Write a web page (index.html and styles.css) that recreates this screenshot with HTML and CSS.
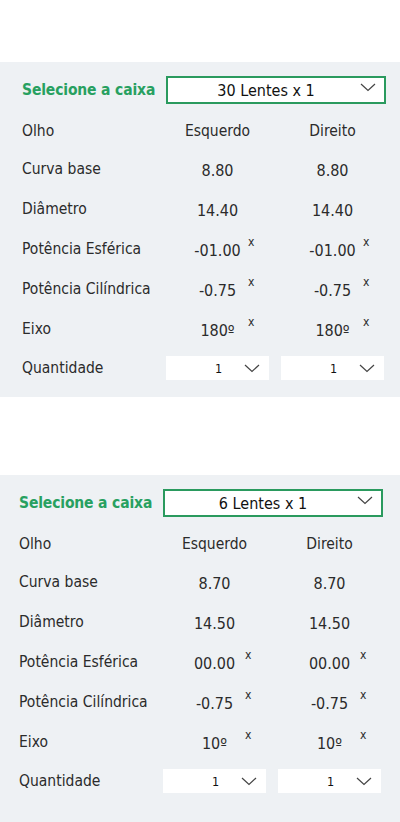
FILE: index.html
```html
<!DOCTYPE html>
<html lang="pt">
<head>
<meta charset="utf-8">
<title>Lentes</title>
<link rel="stylesheet" href="styles.css">
</head>
<body>
<main class="page">
  <section class="panel">
    <div class="panel-inner">
      <div class="box-row">
        <span class="box-label">Selecione a caixa</span>
        <div class="box-select">
          <span class="box-value">30 Lentes x 1</span>
          <svg class="chev chev--box" width="16" height="9" viewBox="0 0 16 9"><polyline points="1,1 8,7.5 15,1" fill="none" stroke="#444" stroke-width="1.2"/></svg>
        </div>
      </div>
      <div class="spec">
        <div class="row row--head"><span class="label">Olho</span><span class="cell head">Esquerdo</span><span class="cell head">Direito</span></div>
        <div class="row"><span class="label">Curva base</span><span class="cell">8.80</span><span class="cell">8.80</span></div>
        <div class="row"><span class="label">Diâmetro</span><span class="cell">14.40</span><span class="cell">14.40</span></div>
        <div class="row"><span class="label">Potência Esférica</span><span class="cell">-01.00<sup class="mark">x</sup></span><span class="cell">-01.00<sup class="mark">x</sup></span></div>
        <div class="row"><span class="label">Potência Cilíndrica</span><span class="cell">-0.75<sup class="mark">x</sup></span><span class="cell">-0.75<sup class="mark">x</sup></span></div>
        <div class="row"><span class="label">Eixo</span><span class="cell">180º<sup class="mark">x</sup></span><span class="cell">180º<sup class="mark">x</sup></span></div>
        <div class="row row--qty"><span class="label">Quantidade</span>
          <div class="qty"><span class="qty-value">1</span><svg class="chev chev--qty" width="16" height="9" viewBox="0 0 16 9"><polyline points="1,1 8,7.5 15,1" fill="none" stroke="#444" stroke-width="1.2"/></svg></div>
          <div class="qty"><span class="qty-value">1</span><svg class="chev chev--qty" width="16" height="9" viewBox="0 0 16 9"><polyline points="1,1 8,7.5 15,1" fill="none" stroke="#444" stroke-width="1.2"/></svg></div>
        </div>
      </div>
    </div>
  </section>

  <section class="panel panel--second">
    <div class="panel-inner">
      <div class="box-row">
        <span class="box-label">Selecione a caixa</span>
        <div class="box-select">
          <span class="box-value">6 Lentes x 1</span>
          <svg class="chev chev--box" width="16" height="9" viewBox="0 0 16 9"><polyline points="1,1 8,7.5 15,1" fill="none" stroke="#444" stroke-width="1.2"/></svg>
        </div>
      </div>
      <div class="spec">
        <div class="row row--head"><span class="label">Olho</span><span class="cell head">Esquerdo</span><span class="cell head">Direito</span></div>
        <div class="row"><span class="label">Curva base</span><span class="cell">8.70</span><span class="cell">8.70</span></div>
        <div class="row"><span class="label">Diâmetro</span><span class="cell">14.50</span><span class="cell">14.50</span></div>
        <div class="row"><span class="label">Potência Esférica</span><span class="cell">00.00<sup class="mark">x</sup></span><span class="cell">00.00<sup class="mark">x</sup></span></div>
        <div class="row"><span class="label">Potência Cilíndrica</span><span class="cell">-0.75<sup class="mark">x</sup></span><span class="cell">-0.75<sup class="mark">x</sup></span></div>
        <div class="row"><span class="label">Eixo</span><span class="cell">10º<sup class="mark">x</sup></span><span class="cell">10º<sup class="mark">x</sup></span></div>
        <div class="row row--qty"><span class="label">Quantidade</span>
          <div class="qty"><span class="qty-value">1</span><svg class="chev chev--qty" width="16" height="9" viewBox="0 0 16 9"><polyline points="1,1 8,7.5 15,1" fill="none" stroke="#444" stroke-width="1.2"/></svg></div>
          <div class="qty"><span class="qty-value">1</span><svg class="chev chev--qty" width="16" height="9" viewBox="0 0 16 9"><polyline points="1,1 8,7.5 15,1" fill="none" stroke="#444" stroke-width="1.2"/></svg></div>
        </div>
      </div>
    </div>
  </section>
</main>
</body>
</html>
```

FILE: styles.css
```css
* { box-sizing: border-box; }

html, body {
  margin: 0;
  padding: 0;
  background: #ffffff;
}

body {
  font-family: "DejaVu Sans Condensed", "DejaVu Sans", sans-serif;
  font-stretch: condensed;
  color: #2b2b2b;
}

.page {
  padding-top: 62px;
}

.panel {
  background: #eef1f4;
  padding: 14px 0 7px 22px;
}

.panel--second {
  margin-top: 78px;
  padding-bottom: 20px;
}

.panel--second .panel-inner {
  margin-left: -3px;
}

.box-row {
  display: flex;
  align-items: center;
  height: 28px;
}

.box-label {
  width: 144px;
  font-size: 15.5px;
  font-weight: bold;
  color: #27a060;
  letter-spacing: -0.15px;
  padding-bottom: 1px;
}

.box-select {
  position: relative;
  width: 220px;
  height: 28px;
  border: 2px solid #2a9a5e;
  background: #ffffff;
  display: flex;
  align-items: center;
  justify-content: center;
  padding-right: 20px;
}

.box-value {
  font-size: 16px;
  color: #111;
}

.chev--box {
  position: absolute;
  right: 8px;
  top: 5px;
}

.spec {
  margin-top: 8px;
}

.row {
  display: grid;
  grid-template-columns: 132px 103px 103px;
  column-gap: 12px;
  align-items: center;
  height: 40px;
}

.row--head {
  height: 38px;
}

.label {
  font-size: 15.5px;
  padding-bottom: 3px;
  white-space: nowrap;
}

.row--head .label,
.cell.head {
  padding-bottom: 0;
}

.cell {
  position: relative;
  text-align: center;
  font-size: 16px;
}

.cell.head {
  font-size: 15.5px;
}

.mark {
  position: absolute;
  left: 82px;
  top: -5px;
  font-size: 12px;
  line-height: 1;
  vertical-align: baseline;
}

.row--qty .label {
  padding-bottom: 4px;
}

.qty {
  position: relative;
  height: 24px;
  background: #ffffff;
  display: flex;
  align-items: center;
  justify-content: center;
  margin-bottom: 4px;
}

.qty-value {
  font-size: 12.5px;
  color: #111;
  padding-left: 2px;
}

.chev--qty {
  position: absolute;
  left: 78px;
  top: 8px;
}
```
